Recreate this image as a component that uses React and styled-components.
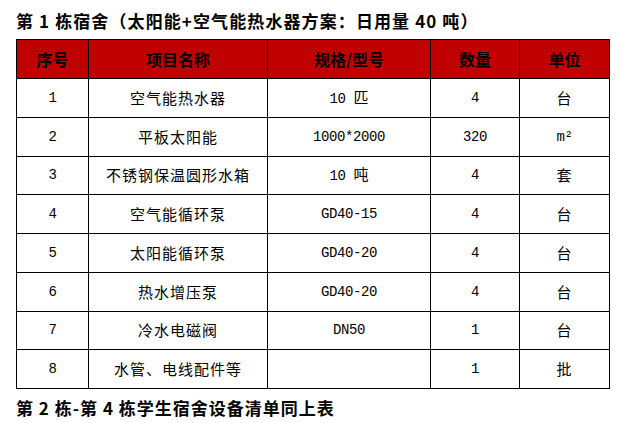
import React from "react";
import styled, { createGlobalStyle } from "styled-components";

const GlobalStyle = createGlobalStyle`
  html, body {
    margin: 0;
    padding: 0;
    background: #fff;
  }
  body {
    font-family: "Noto Sans CJK SC", "Liberation Sans", sans-serif;
    color: #000;
  }
`;

const Page = styled.div`
  width: 622px;
  height: 423px;
  padding-left: 16px;
  box-sizing: border-box;
  overflow: hidden;
`;

const Title = styled.div`
  padding-top: 10px;
  margin-bottom: 7px;
  font-size: 17px;
  line-height: 22px;
  font-weight: 700;
  letter-spacing: 1.1px;
`;

const Footer = styled(Title)`
  padding-top: 8px;
  margin-bottom: 0;
  letter-spacing: 1px;
`;

const Table = styled.table`
  border-collapse: collapse;
  table-layout: fixed;
  width: 593px;
`;

const HeadRow = styled.tr`
  height: 39px;
  background: #c00000;
`;

const Row = styled.tr`
  height: 38.75px;
`;

const Th = styled.th`
  border: 1px solid #000;
  padding: 0;
  font-size: 16px;
  font-weight: 700;
  text-align: center;
  vertical-align: middle;
`;

const Td = styled.td`
  border: 1px solid #000;
  padding: 0;
  text-align: center;
  vertical-align: middle;
  font-family: ${(p) =>
    p.$mono
      ? `"Liberation Mono", "Noto Sans CJK SC", monospace`
      : `"Noto Sans CJK SC", "Liberation Sans", sans-serif`};
  font-size: ${(p) => (p.$mono ? "14px" : "15px")};
  letter-spacing: ${(p) => (p.$mono ? "-0.4px" : "1px")};
  line-height: 20px;
`;

const Cjk = styled.span`
  font-family: "Noto Sans CJK SC", sans-serif;
  font-size: 15px;
  letter-spacing: 0;
`;

const cols = [72, 179, 163, 89, 90];

const rows = [
  ["1", "空气能热水器", <>10 <Cjk>匹</Cjk></>, "4", "台"],
  ["2", "平板太阳能", "1000*2000", "320", "m²"],
  ["3", "不锈钢保温圆形水箱", <>10 <Cjk>吨</Cjk></>, "4", "套"],
  ["4", "空气能循环泵", "GD40-15", "4", "台"],
  ["5", "太阳能循环泵", "GD40-20", "4", "台"],
  ["6", "热水增压泵", "GD40-20", "4", "台"],
  ["7", "冷水电磁阀", "DN50", "1", "台"],
  ["8", "水管、电线配件等", "", "1", "批"],
];

export default function App() {
  return (
    <Page>
      <GlobalStyle />
      <Title>第 1 栋宿舍（太阳能+空气能热水器方案：日用量 40 吨）</Title>
      <Table>
        <colgroup>
          {cols.map((w, i) => (
            <col key={i} style={{ width: w }} />
          ))}
        </colgroup>
        <thead>
          <HeadRow>
            <Th>序号</Th>
            <Th>项目名称</Th>
            <Th>规格/型号</Th>
            <Th>数量</Th>
            <Th>单位</Th>
          </HeadRow>
        </thead>
        <tbody>
          {rows.map((r) => (
            <Row key={r[0]}>
              <Td $mono>{r[0]}</Td>
              <Td>{r[1]}</Td>
              <Td $mono>{r[2]}</Td>
              <Td $mono>{r[3]}</Td>
              <Td $mono={r[4] === "m²"}>{r[4]}</Td>
            </Row>
          ))}
        </tbody>
      </Table>
      <Footer>第 2 栋-第 4 栋学生宿舍设备清单同上表</Footer>
    </Page>
  );
}
